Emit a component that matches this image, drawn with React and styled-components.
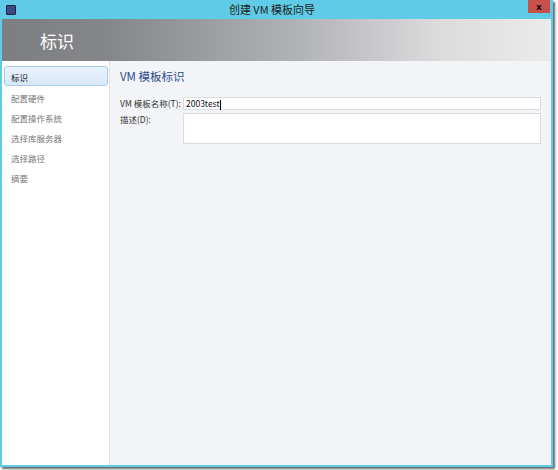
import React from "react";
import styled, { createGlobalStyle } from "styled-components";

const G = createGlobalStyle`
  html,body{margin:0;padding:0;background:#fff;width:558px;height:470px;overflow:hidden;}
  *{box-sizing:border-box;}
  body{font-family:"Noto Sans CJK SC","Noto Sans",sans-serif;}
`;
const Outer = styled.div`width:558px;height:470px;padding:0 4px 3px 0;`;
const Win = styled.div`
  width:553px;height:467px;background:#5fcbe6;display:flex;flex-direction:column;
  padding:0 2px 2px 2px;box-shadow:2px 2px 2px rgba(0,0,0,.6);
`;
const Title = styled.div`
  height:19px;display:flex;align-items:center;position:relative;flex-shrink:0;
`;
const AppIcon = styled.div`
  width:10px;height:10px;margin-left:4px;background:#3b4a8a;border:1px solid #223;border-radius:1px;
`;
const TitleText = styled.div`
  flex:1;text-align:center;font-size:11px;color:#222;line-height:19px;
`;
const Close = styled.div`
  width:22px;height:13px;align-self:flex-start;margin-right:1px;background:#c9504a;
  color:#111;font-size:9px;font-weight:bold;display:flex;align-items:center;justify-content:center;
  font-family:"DejaVu Sans",sans-serif;
`;
const Header = styled.div`
  height:42px;flex-shrink:0;display:flex;align-items:center;padding-left:38px;
  background:linear-gradient(90deg,#7d7e82 0%,#86878b 20%,#b3b4b7 55%,#dcdcdd 80%,#ebebeb 100%);
  color:#fff;font-size:17px;
`;
const Body = styled.div`flex:1;display:flex;min-height:0;`;
const Nav = styled.div`
  width:108px;background:#fff;border-right:1px solid #e2e2e2;padding:5px 1px 0 2px;
  display:flex;flex-direction:column;gap:0;
`;
const NavItem = styled.div`
  height:20px;margin-bottom:${p=>p.active?"1px":"0"};line-height:20px;padding-left:6px;font-size:8.5px;
  color:${p=>p.active?"#222":"#777"};
  background:${p=>p.active?"linear-gradient(#eaf3fd,#d7e8fb)":"transparent"};
  border:1px solid ${p=>p.active?"#a9c8ea":"transparent"};border-radius:3px;
`;
const Content = styled.div`flex:1;background:#f3f4f7;padding:6px 10px 0 10px;`;
const H = styled.div`font-size:11.5px;color:#2b4a8a;margin:1px 0 13px 0;`;
const Row = styled.div`display:grid;grid-template-columns:63px 1fr;align-items:start;margin-bottom:3px;`;
const Label = styled.div`font-size:8.5px;color:#333;line-height:13px;`;
const Input = styled.div`
  height:13px;border:1px solid #d8dbe0;background:#fff;font-size:8.5px;line-height:11px;padding-left:2px;color:#111;
`;
const Area = styled(Input)`height:31px;`;
const Caret = styled.span`display:inline-block;width:1px;height:10px;background:#000;vertical-align:middle;`;

export default function App(){
  const items=["标识","配置硬件","配置操作系统","选择库服务器","选择路径","摘要"];
  return <Outer><G/><Win>
    <Title><AppIcon/><TitleText>创建 VM 模板向导</TitleText><Close>x</Close></Title>
    <Header>标识</Header>
    <Body>
      <Nav>{items.map((t,i)=><NavItem key={t} active={i===0}>{t}</NavItem>)}</Nav>
      <Content>
        <H>VM 模板标识</H>
        <Row><Label>VM 模板名称(T):</Label><Input>2003test<Caret/></Input></Row>
        <Row><Label>描述(D):</Label><Area/></Row>
      </Content>
    </Body>
  </Win></Outer>;
}
